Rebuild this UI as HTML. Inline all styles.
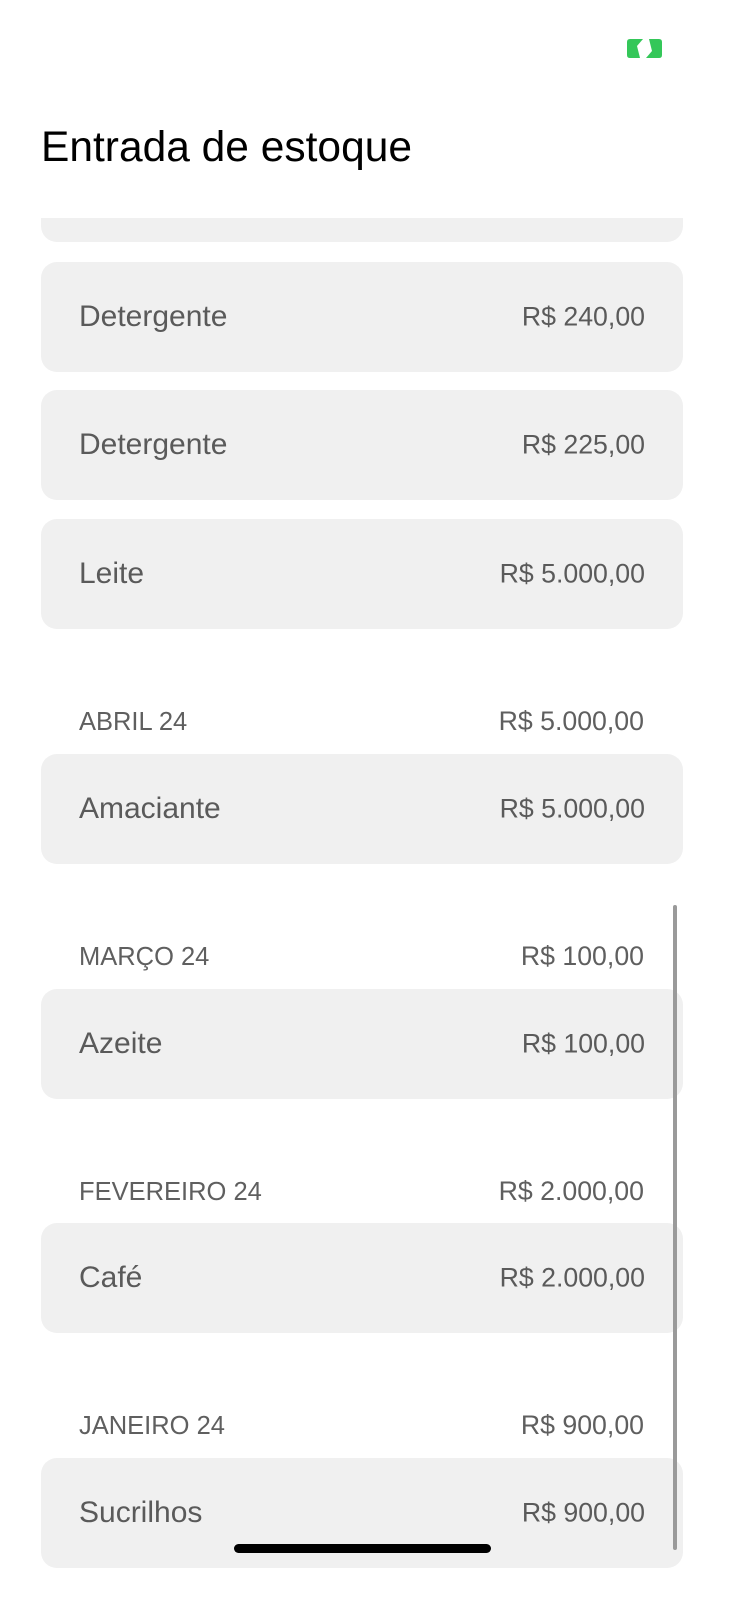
<!DOCTYPE html>
<html><head><meta charset="utf-8"><style>
*{margin:0;padding:0;box-sizing:border-box}
html,body{width:739px;height:1600px;background:#fff;overflow:hidden;font-family:"Liberation Sans",Helvetica,Arial,sans-serif}
.abs{position:absolute}
.card{position:absolute;left:41px;width:642px;height:110px;background:#f0f0f0;border-radius:16px}
.card .l{position:absolute;left:38px;top:50%;transform:translateY(-50%);font-size:30px;color:#5a5a5a}
.card .r{position:absolute;right:38px;top:50%;transform:translateY(-50%);font-size:26.7px;color:#5a5a5a}
.hd{position:absolute;left:79px;width:565px;height:32px;font-size:25.5px;color:#5f5f5f;display:flex;justify-content:space-between;align-items:baseline}
.hd .r{font-size:26.7px}
</style></head><body>
<div class="card" style="top:150px;height:92px"></div>
<div class="abs" style="left:0;top:0;width:739px;height:218px;background:#fff"></div>
<svg class="abs" style="left:627px;top:39px" width="35" height="19" viewBox="0 0 35 19">
<path d="M3 0H16L10 7L13 19H3Q0 19 0 16V3Q0 0 3 0Z" fill="#34c759"/>
<path d="M32 0H22L25 12L19 19H32Q35 19 35 16V3Q35 0 32 0Z" fill="#34c759"/>
</svg>
<div class="abs" style="left:41px;top:124px;font-size:42.5px;color:#000">Entrada de estoque</div>

<div class="card" style="top:262px"><span class="l">Detergente</span><span class="r">R$ 240,00</span></div>
<div class="card" style="top:390px"><span class="l">Detergente</span><span class="r">R$ 225,00</span></div>
<div class="card" style="top:519px"><span class="l">Leite</span><span class="r">R$ 5.000,00</span></div>

<div class="hd" style="top:706px"><span>ABRIL 24</span><span class="r">R$ 5.000,00</span></div>
<div class="card" style="top:754px"><span class="l">Amaciante</span><span class="r">R$ 5.000,00</span></div>

<div class="hd" style="top:941px"><span>MARÇO 24</span><span class="r">R$ 100,00</span></div>
<div class="card" style="top:989px"><span class="l">Azeite</span><span class="r">R$ 100,00</span></div>

<div class="hd" style="top:1176px"><span>FEVEREIRO 24</span><span class="r">R$ 2.000,00</span></div>
<div class="card" style="top:1223px"><span class="l">Café</span><span class="r">R$ 2.000,00</span></div>

<div class="hd" style="top:1410px"><span>JANEIRO 24</span><span class="r">R$ 900,00</span></div>
<div class="card" style="top:1458px"><span class="l">Sucrilhos</span><span class="r">R$ 900,00</span></div>

<div class="abs" style="left:673px;top:905px;width:4px;height:645px;border-radius:2px;background:#9a9a9a"></div>
<div class="abs" style="left:234px;top:1544px;width:257px;height:9px;border-radius:5px;background:#000"></div>
</body></html>
